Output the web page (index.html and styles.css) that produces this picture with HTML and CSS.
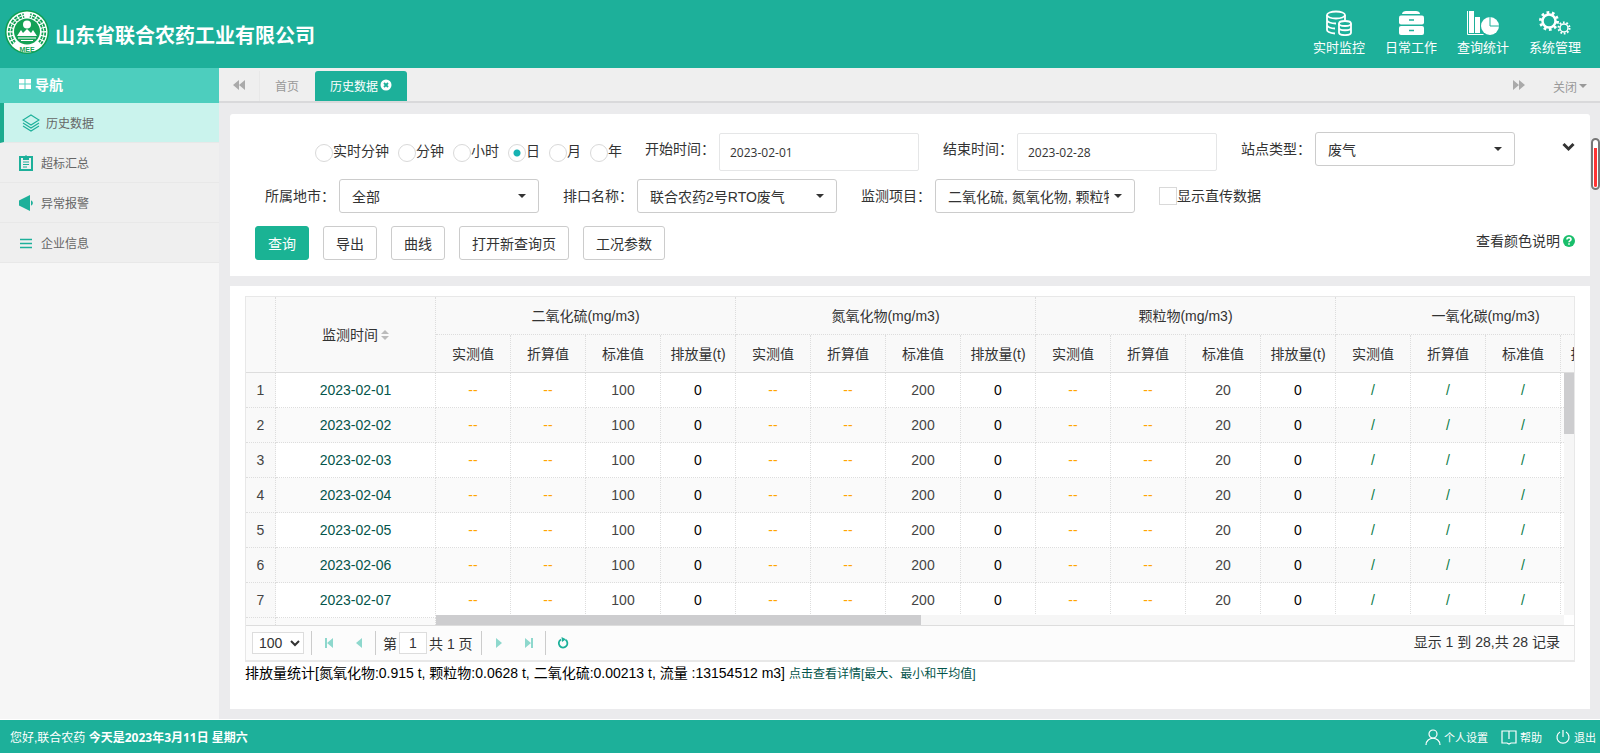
FILE: index.html
```
<!DOCTYPE html>
<html lang="zh">
<head>
    <meta charset="UTF-8">
    <title>历史数据</title>
    <link rel="stylesheet" href="styles.css">
</head>
<body>
    <header class="header">
        <svg class="logo" viewBox="0 0 44 44">
            <circle cx="22" cy="22" r="22" fill="#0f9f52"/>
            <circle cx="22" cy="22" r="20.500" fill="#fff"/>
            <path d="M9 33A17 17 0 0 1 19 5.500M35 33A17 17 0 0 0 25 5.500" fill="none" stroke="#13a155" stroke-width="4.500" stroke-dasharray="3 1.200"/>
            <path d="M9 33A17 17 0 0 1 19 5.500M35 33A17 17 0 0 0 25 5.500" fill="none" stroke="#fff" stroke-width="1"/>
            <circle cx="22" cy="21.500" r="13" fill="#13a155"/>
            <circle cx="22" cy="14.500" r="4" fill="#fff"/>
            <path d="M12 26l4-6 2 3 4-4 4 4 2-3 4 6z" fill="#fff"/>
            <path d="M13 28h18M16 30.500h12" stroke="#fff" stroke-width="1"/>
            <text x="22" y="41.500" text-anchor="middle" class="logo-text">MEE</text>
        </svg>
        <h1 class="company">山东省联合农药工业有限公司</h1>
        <nav class="top-nav">
            <a href="#">
                <svg width="36" height="26" viewBox="0 0 36 26" fill="none" stroke="#fff" stroke-width="1.800">
                    <ellipse cx="15" cy="5" rx="9" ry="3.500"/>
                    <path d="M6 5v15c0 1.500 3 3 8 3.500M24 5v5M6 10c0 2 4 3.500 9 3.500M6 15c0 2 4 3.500 8 3.500"/>
                    <ellipse cx="24" cy="13.500" rx="6" ry="2.500"/>
                    <path d="M18 13.500v9c0 3.500 12 3.500 12 0v-9M18 18c0 3 12 3 12 0"/>
                </svg>
                <span>实时监控</span>
            </a>
            <a href="#">
                <svg width="36" height="26" viewBox="0 0 36 26">
                    <path d="M9 4c0-2 2-3 4-3h10c2 0 4 1 4 3z" fill="#fff"/>
                    <rect x="6" y="5.500" width="25" height="9" rx="2" fill="#fff"/>
                    <rect x="6" y="16" width="25" height="9" rx="2" fill="#fff"/>
                    <path d="M16 10h5M16 20.500h5" stroke="#1db09a" stroke-width="1.500"/>
                </svg>
                <span>日常工作</span>
            </a>
            <a href="#">
                <svg width="36" height="26" viewBox="0 0 36 26">
                    <path d="M2.500 1v23.500h16" fill="none" stroke="#fff"/>
                    <path d="M4 1h5v22H4zM10 7h5v16h-5z" fill="#fff"/>
                    <circle cx="25" cy="16" r="9" fill="#fff"/>
                    <path d="M25 6v10h10" fill="none" stroke="#1db09a"/>
                </svg>
                <span>查询统计</span>
            </a>
            <a href="#">
                <svg width="36" height="26" viewBox="0 0 36 26" fill="none" stroke="#fff">
                    <circle cx="12" cy="11" r="6.500" stroke-width="2.500"/>
                    <circle cx="12" cy="11" r="8.500" stroke-width="3" stroke-dasharray="2.670 2.670"/>
                    <circle cx="27" cy="18" r="4" stroke-width="1.500"/>
                    <circle cx="27" cy="18" r="5.500" stroke-width="2" stroke-dasharray="1.728 1.728"/>
                </svg>
                <span>系统管理</span>
            </a>
        </nav>
    </header>

    <div class="main">
        <aside class="sidebar">
            <div class="sidebar-title">
                <svg width="12" height="10" viewBox="0 0 12 10"><path d="M0 0h5.500v4.500H0zM6.500 0H12v4.500H6.500zM0 5.500h5.500V10H0zM6.500 5.500H12V10H6.500z" fill="#fff"/></svg>
                <span>导航</span>
            </div>
            <a class="menu-item active" href="#">
                <svg width="18" height="18" viewBox="0 0 18 18" fill="none" stroke="#1db09a" stroke-width="1.200">
                    <path d="M9 1L17 6 9 11 1 6z"/><path d="M1 9l8 5 8-5M1 12l8 5 8-5"/>
                </svg>
                <span>历史数据</span>
            </a>
            <a class="menu-item" href="#">
                <svg width="14" height="16" viewBox="0 0 14 16">
                    <path d="M1 2h12v13H1z" fill="none" stroke="#1db09a" stroke-width="2"/>
                    <path d="M4 1h2l1-1 1 1h2v4H4z" fill="#1db09a"/>
                    <path d="M4 7h6M4 9.500h6M4 12h4" stroke="#1db09a"/>
                </svg>
                <span>超标汇总</span>
            </a>
            <a class="menu-item" href="#">
                <svg width="14" height="16" viewBox="0 0 14 16"><path d="M0 5.500l3-1.500 8-4v16l-8-4-3-1.500zM12 5.500c2.500.500 2.500 4.500 0 5z" fill="#1db09a"/></svg>
                <span>异常报警</span>
            </a>
            <a class="menu-item" href="#">
                <svg width="14" height="16" viewBox="0 0 14 16"><path d="M1 4.500h12M1 8.500h12M1 12.500h12" stroke="#1db09a" stroke-width="1.500"/></svg>
                <span>企业信息</span>
            </a>
        </aside>

        <main class="content">
            <div class="tabs">
                <button class="tab-arrow" aria-label="向左"><svg width="12" height="10" viewBox="0 0 12 10"><path d="M6 0v10L0 5zM12 0v10L6 5z" fill="#aaa"/></svg></button>
                <a class="tab" href="#">首页</a>
                <a class="tab current" href="#">历史数据
                    <svg width="12" height="12" viewBox="0 0 12 12"><circle cx="6" cy="6" r="5.500" fill="#fff"/><path d="M4 4l4 4M8 4l-4 4" stroke="#1db09a" stroke-width="1.800"/></svg>
                </a>
                <button class="tab-arrow next" aria-label="向右"><svg width="12" height="10" viewBox="0 0 12 10"><path d="M0 0v10l6-5zM6 0v10l6-5z" fill="#aaa"/></svg></button>
                <button class="tab-close">关闭<i class="caret"></i></button>
            </div>

            <form class="panel filters">
                <div class="row first">
                    <div class="radios">
                        <label><input type="radio" name="type">实时分钟</label>
                        <label><input type="radio" name="type">分钟</label>
                        <label><input type="radio" name="type">小时</label>
                        <label><input type="radio" name="type" checked>日</label>
                        <label><input type="radio" name="type">月</label>
                        <label><input type="radio" name="type">年</label>
                    </div>
                    <div class="field"><label for="start">开始时间：</label><input class="date" id="start" type="text" value="2023-02-01"></div>
                    <div class="field"><label for="end">结束时间：</label><input class="date" id="end" type="text" value="2023-02-28"></div>
                    <div class="field"><label for="site">站点类型：</label><span class="select"><select id="site"><option>废气</option></select></span></div>
                    <button class="collapse" type="button" aria-label="收起"><svg width="13" height="10" viewBox="0 0 13 10"><path d="M1.500 2l5 5 5-5" fill="none" stroke="#333" stroke-width="3"/></svg></button>
                </div>
                <div class="row second">
                    <div class="field"><label for="city">所属地市：</label><span class="select"><select id="city"><option>全部</option></select></span></div>
                    <div class="field"><label for="port">排口名称：</label><span class="select"><select id="port"><option>联合农药2号RTO废气</option></select></span></div>
                    <div class="field"><label for="item">监测项目：</label><span class="select"><select id="item"><option>二氧化硫, 氮氧化物, 颗粒物, 一氧化碳</option></select></span></div>
                    <label class="check"><input type="checkbox">显示直传数据</label>
                </div>
                <div class="row buttons">
                    <button class="btn primary" type="button">查询</button>
                    <button class="btn" type="button">导出</button>
                    <button class="btn" type="button">曲线</button>
                    <button class="btn" type="button">打开新查询页</button>
                    <button class="btn" type="button">工况参数</button>
                    <a class="color-help" href="#">查看颜色说明
                        <svg width="12" height="12" viewBox="0 0 12 12"><circle cx="6" cy="6" r="6" fill="#19be6b"/><path d="M4 4.500c0-2.500 4-2.500 4 0 0 1.500-2 1.200-2 2.700M6 8.200v1.600" fill="none" stroke="#fff" stroke-width="1.600"/></svg>
                    </a>
                </div>
            </form>

            <section class="panel result">
                <div class="grid">
                    <div class="grid-view">
                        <table class="frozen">
                            <thead>
                                <tr><th class="num"></th><th class="time">监测时间<svg class="sort" width="8" height="10" viewBox="0 0 8 10"><path d="M4 0l4 4H0zM4 10l4-4H0z" fill="#bbb"/></svg></th></tr>
                            </thead>
                            <tbody id="frozenRows"></tbody>
                        </table>
                        <div class="scroll-view">
                            <table class="values">
                                <thead>
                                    <tr id="groupRow"></tr>
                                    <tr id="columnRow"></tr>
                                </thead>
                                <tbody id="valueRows"></tbody>
                            </table>
                            <div class="bar-x"><div class="thumb-x"></div></div>
                            <div class="bar-y"><div class="thumb-y"></div></div>
                        </div>
                    </div>
                    <div class="pager">
                        <span class="page-size">
                            <select aria-label="每页条数"><option>100</option></select>
                            <svg width="10" height="7" viewBox="0 0 10 7"><path d="M1 1l4 4 4-4" fill="none" stroke="#333" stroke-width="2"/></svg>
                        </span>
                        <i class="sep"></i>
                        <button aria-label="首页"><svg width="10" height="10" viewBox="0 0 10 10"><path d="M1 0h2v10H1zM9 0v10L3 5z" fill="#8ed8cd"/></svg></button>
                        <button aria-label="上一页"><svg width="10" height="10" viewBox="0 0 10 10"><path d="M8 0v10L2 5z" fill="#8ed8cd"/></svg></button>
                        <i class="sep"></i>
                        <label class="page-label">第<input type="text" value="1">共 1 页</label>
                        <i class="sep"></i>
                        <button aria-label="下一页"><svg width="10" height="10" viewBox="0 0 10 10"><path d="M2 0v10l6-5z" fill="#8ed8cd"/></svg></button>
                        <button aria-label="末页"><svg width="10" height="10" viewBox="0 0 10 10"><path d="M7 0h2v10H7zM1 0v10l6-5z" fill="#8ed8cd"/></svg></button>
                        <i class="sep"></i>
                        <button aria-label="刷新"><svg width="12" height="12" viewBox="0 0 12 12"><path d="M4 2.500A4.300 4.300 0 1 0 8.500 2.700" fill="none" stroke="#1db09a" stroke-width="1.800"/><path d="M4.500 0L9 2.300 5 5z" fill="#1db09a"/></svg></button>
                        <span class="page-info">显示 1 到 28,共 28 记录</span>
                    </div>
                </div>
                <p class="summary">排放量统计[氮氧化物:0.915 t, 颗粒物:0.0628 t, 二氧化硫:0.00213 t, 流量 :13154512 m3] <a href="#">点击查看详情[最大、最小和平均值]</a></p>
            </section>
        </main>
    </div>

    <footer class="footer">
        <span>您好,联合农药 <b>今天是2023年3月11日 星期六</b></span>
        <div class="footer-links">
            <a href="#"><svg width="16" height="16" viewBox="0 0 16 16"><circle cx="8" cy="5" r="4"/><path d="M1 16c0-9 14-9 14 0"/></svg>个人设置</a>
            <a href="#"><svg width="16" height="16" viewBox="0 0 16 16"><path d="M6 2H1v12h5l2 1 2-1h5V2h-5M8 2v8M6 2h4"/></svg>帮助</a>
            <a href="#"><svg width="16" height="16" viewBox="0 0 16 16"><path d="M5 3a6 6 0 1 0 6 0M8 1v7"/></svg>退出</a>
        </div>
    </footer>
    <div class="side-gauge"></div>
    <script src="script.js"></script>
</body>
</html>
```
FILE: styles.css
```
* {
    box-sizing: border-box;
}
body {
    font-family: "Liberation Sans", Arial, "Noto Sans CJK SC", sans-serif;
    font-size: 14px;
    color: #333;
    background: #fff;
    margin: 0;
    height: 100vh;
    display: flex;
    flex-direction: column;
    overflow: hidden;
}
a {
    color: inherit;
    text-decoration: none;
}
button, input, select {
    font: inherit;
    color: inherit;
    margin: 0;
}
button {
    border: none;
    background: none;
    padding: 0;
}
svg {
    flex: none;
}
.header {
    flex: none;
    height: 68px;
    background: #1db09a;
    color: #fff;
    display: flex;
    align-items: center;
    padding: 0 9px 0 5px;
}
.logo {
    width: 44px;
    height: 44px;
    margin-bottom: 4px;
}
.logo-text {
    font-size: 7px;
    font-weight: bold;
    fill: #13a155;
}
.company {
    font-size: 20px;
    line-height: 28px;
    margin: 0 0 0 6px;
    padding-top: 4px;
}
.top-nav {
    margin-left: auto;
    display: flex;
}
.top-nav a {
    width: 72px;
    display: flex;
    flex-direction: column;
    align-items: center;
    font-size: 13px;
    line-height: 20px;
    gap: 2px;
}
.main {
    flex: 1;
    min-height: 0;
    display: flex;
    border-bottom: 1px solid #fff;
}
.sidebar {
    flex: none;
    width: 219px;
    background: #f6f6f6;
}
.sidebar-title {
    height: 35px;
    background: #4dcebe;
    color: #fff;
    font-weight: bold;
    display: flex;
    align-items: center;
    gap: 4px;
    padding: 0 0 4px 19px;
}
.menu-item {
    height: 40px;
    background: #efefef;
    border-bottom: 1px solid #e8e8e8;
    color: #666;
    font-size: 12px;
    display: flex;
    align-items: center;
    gap: 8px;
    padding-left: 19px;
}
.menu-item.active {
    background: #caf3ed;
    border-left: 4px solid #1bab8f;
    gap: 6px;
    padding-left: 18px;
}
.content {
    flex: 1;
    min-width: 0;
    background: #ebebed;
    display: flex;
    flex-direction: column;
}
.tabs {
    flex: none;
    height: 35px;
    background: #efefef;
    border-bottom: 2px solid #d9d9db;
    color: #999;
    font-size: 12px;
    display: flex;
    align-items: flex-end;
}
.tab-arrow {
    width: 41px;
    height: 30px;
    border-right: 1px solid #e8e8e8;
}
.tab-arrow.next {
    margin-left: auto;
    border: none;
}
.tab {
    height: 30px;
    padding: 0 15px 2px;
    display: flex;
    align-items: center;
    gap: 2px;
}
.tab.current {
    background: #1db09a;
    color: #fff;
    border-radius: 3px 3px 0 0;
    margin-left: 1px;
}
.tab-close {
    height: 30px;
    padding: 0 13px;
    display: flex;
    align-items: center;
    gap: 2px;
}
.caret {
    border: 4px solid transparent;
    border-top-color: #999;
    border-bottom: none;
}
.panel {
    background: #fff;
    margin: 0 10px 10px 11px;
}
.filters {
    flex: none;
    margin-top: 11px;
    border-radius: 3px 3px 0 0;
    padding: 18px 15px 16px 25px;
}
.row {
    display: flex;
    align-items: flex-start;
}
.row.first {
    padding-left: 60px;
    margin-bottom: 8px;
}
.row.second {
    padding-left: 10px;
    margin-bottom: 13px;
    gap: 24px;
}
.radios {
    display: flex;
    gap: 9px;
    margin-right: 23px;
}
.radios label, .check {
    display: flex;
    align-items: center;
    line-height: 38px;
}
.radios input, .check input {
    appearance: none;
    width: 18px;
    height: 18px;
    border: 1px solid #d9d9d9;
    border-radius: 50%;
}
.radios input {
    margin-top: 4px;
}
.radios input:checked {
    background: radial-gradient(circle, #17b3b3 3px, transparent 4px);
}
.check {
    line-height: 34px;
}
.check input {
    border-radius: 0;
}
.field {
    display: flex;
    line-height: 34px;
}
.first .field + .field {
    margin-left: 24px;
}
.field label {
    width: 74px;
}
.date {
    width: 200px;
    height: 38px;
    border: 1px solid #e5e6e7;
    border-radius: 2px;
    padding: 0 10px;
    margin-top: 1px;
    font-family: "Open Sans", sans-serif;
    font-size: 12px;
}
.select {
    position: relative;
    width: 200px;
    height: 34px;
}
.select select {
    appearance: none;
    width: 100%;
    height: 100%;
    border: 1px solid #ccc;
    border-radius: 3px;
    background: #fff;
    padding: 0 25px 2px 12px;
}
.select::after {
    content: "";
    position: absolute;
    right: 13px;
    top: 15px;
    border: 4px solid transparent;
    border-top-color: #333;
    border-bottom: none;
}
.collapse {
    margin-left: auto;
    height: 30px;
}
.buttons {
    gap: 14px;
}
.btn {
    height: 34px;
    padding: 0 12px;
    border: 1px solid #ccc;
    border-radius: 3px;
    background: #fff;
}
.btn.primary {
    background: #1ab394;
    border-color: #1ab394;
    color: #fff;
}
.color-help {
    margin-left: auto;
    line-height: 30px;
    display: flex;
    align-items: center;
    gap: 3px;
}
.result {
    flex: 1;
    min-height: 0;
    padding: 10px 15px 24px;
    display: flex;
    flex-direction: column;
}
.grid {
    flex: 1;
    min-height: 0;
    border: 1px solid #e8e8e8;
    border-bottom-width: 2px;
    display: flex;
    flex-direction: column;
}
.grid-view {
    flex: 1;
    min-height: 0;
    display: flex;
    overflow: hidden;
}
.grid table {
    flex: none;
    border-collapse: separate;
    border-spacing: 0;
    table-layout: fixed;
    align-self: flex-start;
}
.grid th {
    height: 38px;
    background: #f9f9f9;
    border-right: 1px dotted #ddd;
    border-bottom: 1px dotted #ddd;
    font-weight: normal;
    padding: 0 0 2px;
}
.grid .frozen th {
    height: 76px;
}
.frozen th, .values tr:last-child th {
    border-bottom: 1px solid #ddd;
}
.grid td {
    height: 35px;
    border-right: 1px dotted #ddd;
    border-bottom: 1px dotted #ddd;
    padding: 0;
    text-align: center;
}
.grid tbody tr:nth-child(even) {
    background: #fafafa;
}
.frozen {
    width: 190px;
}
.num {
    width: 30px;
}
.frozen td.num {
    background: #f9f9f9;
    color: #444;
}
.sort {
    margin-left: 3px;
}
.values {
    width: 1200px;
}
td.date-cell, .summary a {
    color: #04554b;
}
td.missing {
    color: #ffa500;
}
td.limit {
    color: #444;
}
td.total {
    color: #000;
}
td.none {
    color: #0a7a45;
}
.scroll-view {
    flex: 1;
    min-width: 0;
    position: relative;
    overflow: hidden;
}
/* scroll bars lie over the value columns */
.bar-x {
    position: absolute;
    left: 0;
    right: 0;
    bottom: 0;
    height: 10px;
    background: #f6f6f6;
    border-right: 10px solid #fff;
}
.thumb-x {
    width: 43%;
    height: 10px;
    background: #cdcdcf;
}
.bar-y {
    position: absolute;
    right: 0;
    top: 76px;
    bottom: 10px;
    width: 10px;
    background: #f6f6f6;
}
.thumb-y {
    height: 25%;
    background: #cdcdcf;
}
.pager {
    flex: none;
    height: 35px;
    border-top: 1px solid #ddd;
    background: #fcfcfc;
    display: flex;
    align-items: center;
    padding: 0 14px 0 6px;
}
.page-size {
    position: relative;
    width: 52px;
    height: 22px;
    margin-right: 6px;
}
.page-size select {
    appearance: none;
    width: 100%;
    height: 100%;
    border: 1px solid #ddd;
    background: #fff;
    padding: 0 6px;
}
.page-size svg {
    position: absolute;
    right: 4px;
    top: 8px;
}
.sep {
    width: 1px;
    height: 24px;
    background: #ccc;
    margin: 0 2px 0 1px;
}
.pager button {
    width: 30px;
    height: 24px;
    display: flex;
    align-items: center;
    justify-content: center;
}
.page-label {
    display: flex;
    align-items: center;
    padding: 0 7px 0 5px;
    gap: 2px;
}
.page-label input {
    width: 28px;
    height: 22px;
    border: 1px solid #ddd;
    text-align: center;
    padding: 0;
}
.page-info {
    margin-left: auto;
    padding-bottom: 4px;
}
.summary {
    margin: 0;
    line-height: 22px;
    color: #000;
}
.summary a {
    font-size: 12px;
}
.footer {
    flex: none;
    height: 33px;
    background: #1db09a;
    color: #fff;
    font-size: 12px;
    display: flex;
    align-items: center;
    justify-content: space-between;
    padding: 0 4px 0 10px;
}
.footer b {
    font-family: "Noto Sans", "Noto Sans CJK SC", sans-serif;
}
.footer-links {
    display: flex;
    gap: 13px;
    font-size: 11px;
}
.footer-links a {
    display: flex;
    align-items: center;
    gap: 3px;
}
.footer-links svg {
    fill: none;
    stroke: #fff;
    stroke-width: 1.2;
}
.side-gauge {
    position: absolute;
    right: 0;
    top: 138px;
    width: 9px;
    height: 52px;
    border: 2px solid #777;
    border-radius: 5px;
    background: linear-gradient(#fff 7px, #f33 7px) content-box, #fff;
    padding: 1px;
}
```
FILE: script.js
```
var groups = [
    { name: '二氧化硫', value: '--', limit: '100', total: '0' },
    { name: '氮氧化物', value: '--', limit: '200', total: '0' },
    { name: '颗粒物', value: '--', limit: '20', total: '0' },
    { name: '一氧化碳', value: '/', limit: '/', total: '' }
];
var columns = ['实测值', '折算值', '标准值', '排放量(t)'];
var dates = ['2023-02-01', '2023-02-02', '2023-02-03', '2023-02-04', '2023-02-05', '2023-02-06', '2023-02-07'];

function cell(text, cls) {
    return '<td class="' + (text === '/' ? 'none' : cls) + '">' + text + '</td>';
}

var groupHtml = '', columnHtml = '', valueHtml = '';
groups.forEach(function (g) {
    groupHtml += '<th colspan="4">' + g.name + '(mg/m3)</th>';
    columns.forEach(function (c) {
        columnHtml += '<th>' + c + '</th>';
    });
    valueHtml += cell(g.value, 'missing') + cell(g.value, 'missing') + cell(g.limit, 'limit') + cell(g.total, 'total');
});
document.getElementById('groupRow').innerHTML = groupHtml;
document.getElementById('columnRow').innerHTML = columnHtml;

var frozenHtml = '', rowsHtml = '';
dates.forEach(function (date, i) {
    frozenHtml += '<tr><td class="num">' + (i + 1) + '</td><td class="date-cell">' + date + '</td></tr>';
    rowsHtml += '<tr>' + valueHtml + '</tr>';
});
// empty row that fills the strip beside the scroll bar
frozenHtml += '<tr><td class="num"></td><td></td></tr>';
document.getElementById('frozenRows').innerHTML = frozenHtml;
document.getElementById('valueRows').innerHTML = rowsHtml;
```
